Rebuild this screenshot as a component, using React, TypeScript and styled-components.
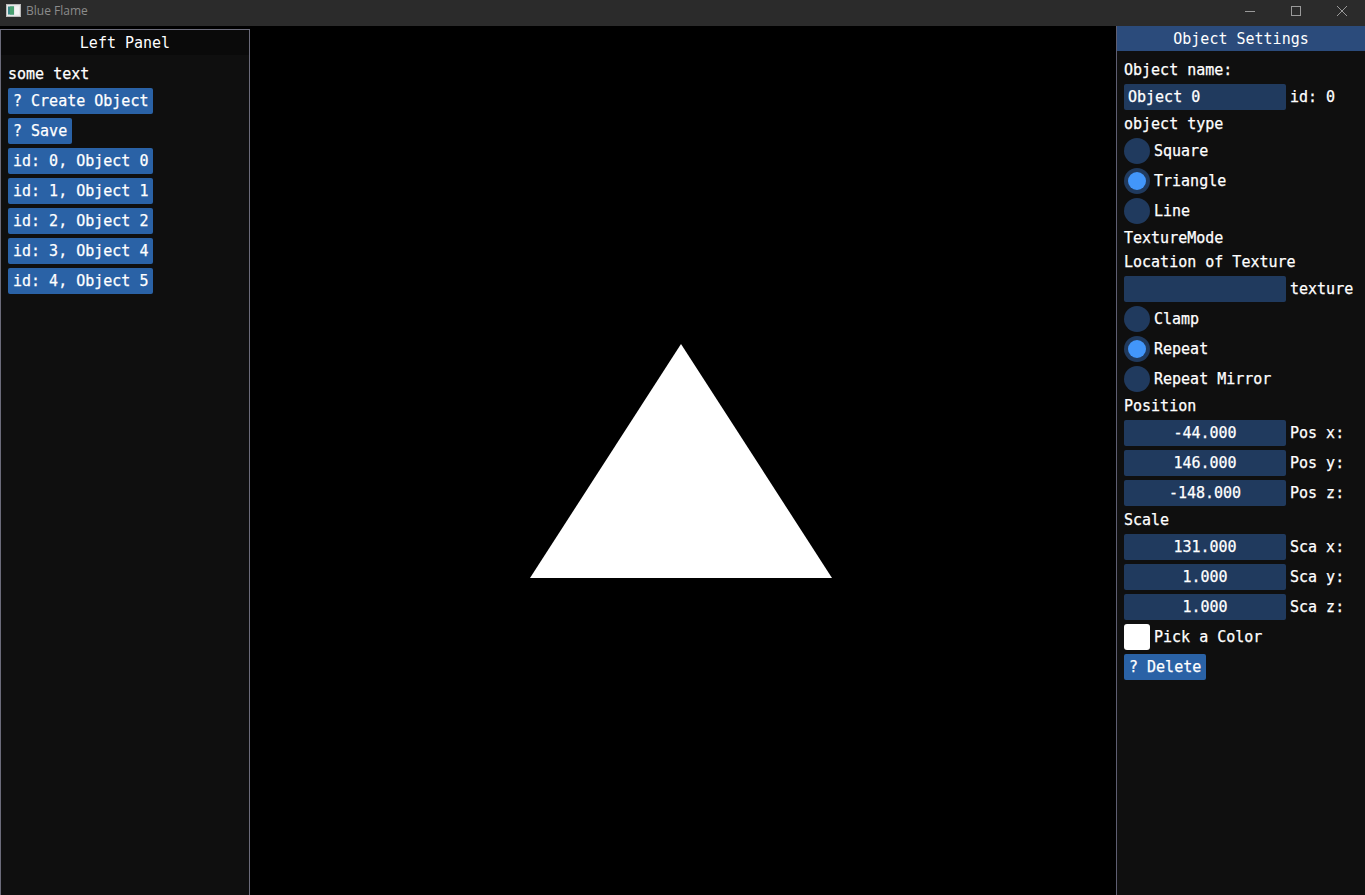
import React from "react";
import styled, { createGlobalStyle } from "styled-components";

const Global = createGlobalStyle`
  html, body { margin: 0; padding: 0; background: #000; }
  body { width: 1365px; height: 895px; overflow: hidden; }
  * { box-sizing: border-box; }
`;

const Frame = styled.div`
  width: 1365px;
  height: 895px;
  display: flex;
  flex-direction: column;
  background: #000;
  font-family: "DejaVu Sans Mono", "Liberation Mono", monospace;
  font-size: 15px;
  color: #fff;
`;

const OsBar = styled.div`
  height: 26px;
  flex: none;
  background: #2b2b2b;
  display: flex;
  align-items: flex-start;
`;

const AppIcon = styled.div`
  width: 26px;
  height: 21px;
  display: flex;
  align-items: center;
  justify-content: center;
`;

const OsTitle = styled.span`
  font-family: "Open Sans", "Noto Sans", sans-serif;
  font-size: 12px;
  line-height: 21px;
  color: #8c8c8c;
  flex: 1;
`;

const Ctl = styled.div`
  width: 46px;
  height: 21px;
  display: flex;
  align-items: center;
  justify-content: center;
`;

const Body = styled.div`
  flex: 1;
  display: flex;
  min-height: 0;
`;

const LeftPanel = styled.div`
  width: 250px;
  margin-top: 3px;
  flex: none;
  border: 1px solid #6b6b7a;
  border-bottom: none;
  background: #0f0f0f;
  display: flex;
  flex-direction: column;
`;

const RightPanel = styled.div`
  width: 249px;
  flex: none;
  border-left: 1px solid #5e5e72;
  background: #0f0f0f;
  display: flex;
  flex-direction: column;
`;

const TitleBar = styled.div<{ $active?: boolean }>`
  height: 25px;
  flex: none;
  background: ${(p) => (p.$active ? "#2b4b7b" : "#0a0a0a")};
  display: flex;
  align-items: center;
  justify-content: center;
  line-height: 25px;
  padding-top: 1px;
`;

const Content = styled.div`
  padding: 9px 8px 8px 7px;
  display: flex;
  flex-direction: column;
  gap: 4px;
  align-items: flex-start;
`;

const Text = styled.div`
  line-height: 20px;
  height: 20px;
  white-space: pre;
  -webkit-text-stroke: 0.25px #fff;
`;

const Button = styled.div`
  height: 26px;
  line-height: 26px;
  padding: 0 5px;
  background: #2a62a6;
  border-radius: 2px;
  white-space: pre;
  -webkit-text-stroke: 0.25px #fff;
`;

const Viewport = styled.div`
  flex: 1;
  background: #000;
  display: flex;
`;

const Row = styled.div`
  display: flex;
  align-items: center;
  gap: 4px;
  height: 26px;
`;

const Field = styled.div<{ $center?: boolean }>`
  width: 162px;
  height: 26px;
  line-height: 26px;
  background: #203a5e;
  border-radius: 2px;
  padding: 0 4px;
  text-align: ${(p) => (p.$center ? "center" : "left")};
  white-space: pre;
  -webkit-text-stroke: 0.25px #fff;
`;

const Radio = styled.div<{ $on?: boolean }>`
  width: 26px;
  height: 26px;
  border-radius: 50%;
  background: #203a5e;
  display: flex;
  align-items: center;
  justify-content: center;
  &::after {
    content: "";
    display: ${(p) => (p.$on ? "block" : "none")};
    width: 18px;
    height: 18px;
    border-radius: 50%;
    background: #4296fa;
  }
`;

const Swatch = styled.div`
  width: 26px;
  height: 26px;
  background: #fff;
  border-radius: 3px;
`;

const objects = [
  "id: 0, Object 0",
  "id: 1, Object 1",
  "id: 2, Object 2",
  "id: 3, Object 4",
  "id: 4, Object 5",
];

const RadioRow = ({ label, on }: { label: string; on?: boolean }) => (
  <Row>
    <Radio $on={on} />
    <Text>{label}</Text>
  </Row>
);

const NumRow = ({ value, label }: { value: string; label: string }) => (
  <Row>
    <Field $center>{value}</Field>
    <Text>{label}</Text>
  </Row>
);

export default function App() {
  return (
    <Frame>
      <Global />
      <OsBar>
        <AppIcon>
          <svg width="15" height="13" viewBox="0 0 15 13">
            <rect x="0.5" y="0.5" width="14" height="12" fill="#e8e8e8" stroke="#bbb" />
            <rect x="2" y="2.5" width="6" height="8" fill="#3a8a8a" />
            <rect x="4" y="2.5" width="4" height="8" fill="#4aa070" />
            <rect x="9" y="2.5" width="4" height="8" fill="#f4f4f4" />
          </svg>
        </AppIcon>
        <OsTitle>Blue Flame</OsTitle>
        <Ctl>
          <svg width="12" height="12" viewBox="0 0 12 12">
            <line x1="1" y1="6.5" x2="11" y2="6.5" stroke="#9a9a9a" strokeWidth="1" />
          </svg>
        </Ctl>
        <Ctl>
          <svg width="12" height="12" viewBox="0 0 12 12">
            <rect x="1.5" y="1.5" width="9" height="9" fill="none" stroke="#9a9a9a" strokeWidth="1" />
          </svg>
        </Ctl>
        <Ctl>
          <svg width="12" height="12" viewBox="0 0 12 12">
            <path d="M1 1 L11 11 M11 1 L1 11" stroke="#9a9a9a" strokeWidth="1" />
          </svg>
        </Ctl>
      </OsBar>
      <Body>
        <LeftPanel>
          <TitleBar>Left Panel</TitleBar>
          <Content>
            <Text>some text</Text>
            <Button>? Create Object</Button>
            <Button>? Save</Button>
            {objects.map((o) => (
              <Button key={o}>{o}</Button>
            ))}
          </Content>
        </LeftPanel>
        <Viewport>
          <svg width="866" height="869" viewBox="0 0 866 869">
            <polygon points="431,318 280,552 582,552" fill="#fff" />
          </svg>
        </Viewport>
        <RightPanel>
          <TitleBar $active>Object Settings</TitleBar>
          <Content>
            <Text>Object name:</Text>
            <Row>
              <Field>Object 0</Field>
              <Text>id: 0</Text>
            </Row>
            <Text>object type</Text>
            <RadioRow label="Square" />
            <RadioRow label="Triangle" on />
            <RadioRow label="Line" />
            <Text>TextureMode</Text>
            <Text>Location of Texture</Text>
            <Row>
              <Field />
              <Text>texture</Text>
            </Row>
            <RadioRow label="Clamp" />
            <RadioRow label="Repeat" on />
            <RadioRow label="Repeat Mirror" />
            <Text>Position</Text>
            <NumRow value="-44.000" label="Pos x:" />
            <NumRow value="146.000" label="Pos y:" />
            <NumRow value="-148.000" label="Pos z:" />
            <Text>Scale</Text>
            <NumRow value="131.000" label="Sca x:" />
            <NumRow value="1.000" label="Sca y:" />
            <NumRow value="1.000" label="Sca z:" />
            <Row>
              <Swatch />
              <Text>Pick a Color</Text>
            </Row>
            <Button>? Delete</Button>
          </Content>
        </RightPanel>
      </Body>
    </Frame>
  );
}
